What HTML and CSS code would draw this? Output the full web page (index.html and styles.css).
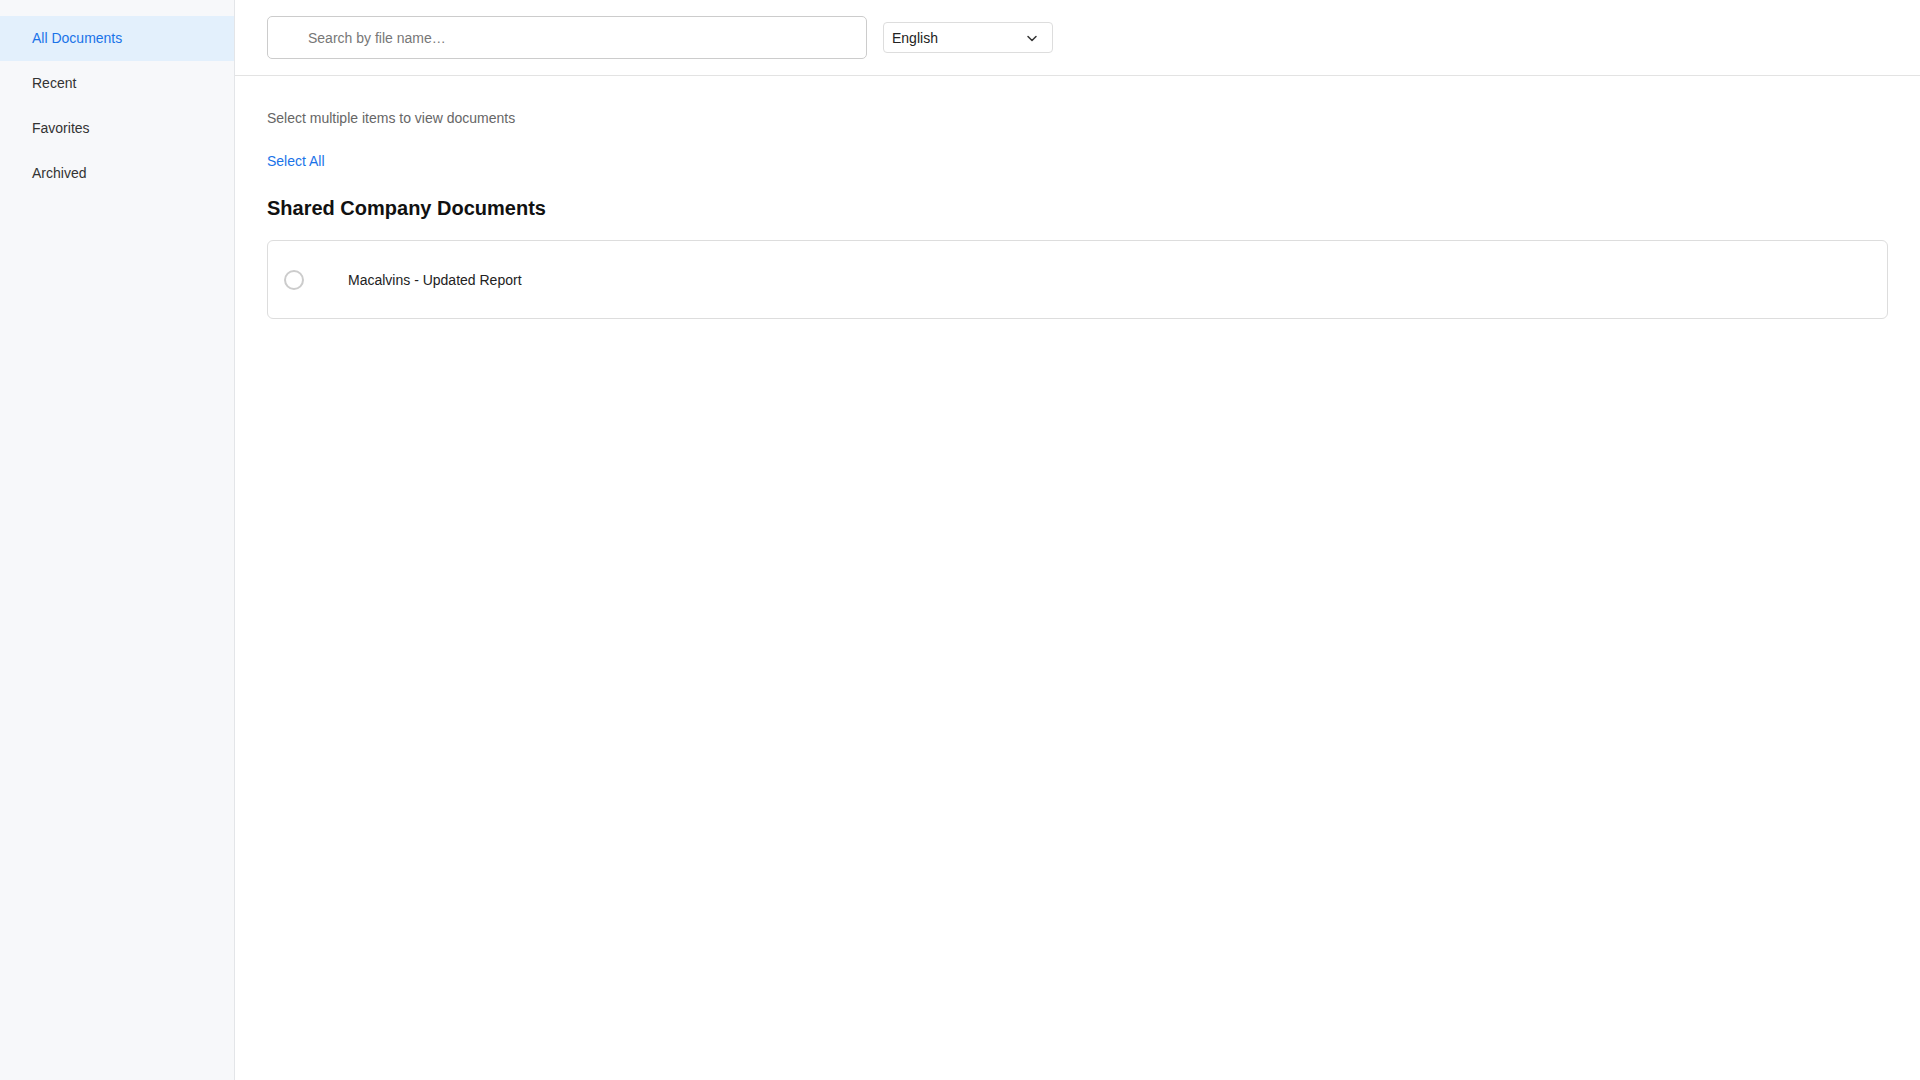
FILE: index.html
```html
<!DOCTYPE html>
<html lang="en">

<head>
    <meta charset="UTF-8">
    <meta name="viewport" content="width=device-width, initial-scale=1.0">
    <title>Documents</title>
    <link rel="stylesheet" href="styles.css">
</head>

<body>
    <div class="layout">
        <!-- Sidebar navigation -->
        <nav class="sidebar">
            <a class="nav-item active" href="#">All Documents</a>
            <a class="nav-item" href="#">Recent</a>
            <a class="nav-item" href="#">Favorites</a>
            <a class="nav-item" href="#">Archived</a>
        </nav>

        <main class="main">
            <header class="topbar">
                <input class="search" type="text" placeholder="Search by file name…">
                <div class="lang-select">
                    <span>English</span>
                    <svg width="14" height="14" viewBox="0 0 14 14" fill="none" stroke="#333" stroke-width="1.5"
                        stroke-linecap="round" stroke-linejoin="round">
                        <path d="M3 5.5 7 9.5l4-4" />
                    </svg>
                </div>
            </header>

            <section class="content">
                <p class="hint">Select multiple items to view documents</p>
                <a class="select-all" href="#">Select All</a>
                <h2>Shared Company Documents</h2>

                <div class="doc-list">
                    <label class="doc-row">
                        <span class="radio"></span>
                        <span class="doc-name">Macalvins - Updated Report</span>
                    </label>
                </div>
            </section>
        </main>
    </div>
</body>

</html>
```

FILE: styles.css
```css
body {
    margin: 0;
    font-family: "Liberation Sans", Arial, sans-serif;
    color: #222;
    background: #fff;
}

.layout {
    display: flex;
    min-height: 100vh;
}

.sidebar {
    width: 234px;
    flex-shrink: 0;
    background-color: #f7f8fa;
    border-right: 1px solid #e3e5e8;
    padding-top: 16px;
    display: flex;
    flex-direction: column;
}

.nav-item {
    display: block;
    height: 45px;
    line-height: 45px;
    padding-left: 32px;
    font-size: 14px;
    color: #333;
    text-decoration: none;
}

.nav-item.active {
    background-color: #e3f0fc;
    color: #1a73e8;
}

.main {
    flex: 1;
    min-width: 0;
}

.topbar {
    height: 76px;
    box-sizing: border-box;
    padding: 16px 32px 0;
    border-bottom: 1px solid #e3e3e3;
    display: flex;
    align-items: flex-start;
    gap: 16px;
}

.search {
    width: 600px;
    height: 43px;
    box-sizing: border-box;
    border: 1px solid #ccc;
    border-radius: 5px;
    padding: 0 12px 0 40px;
    font-family: inherit;
    font-size: 14px;
    color: #333;
    outline: none;
}

.search::placeholder {
    color: #777;
}

.lang-select {
    width: 170px;
    height: 31px;
    margin-top: 6px;
    box-sizing: border-box;
    border: 1px solid #ddd;
    border-radius: 4px;
    padding: 0 13px 0 8px;
    display: flex;
    align-items: center;
    justify-content: space-between;
    font-size: 14px;
    color: #222;
}

.content {
    padding: 32px 32px;
}

.hint {
    margin: 0;
    font-size: 14px;
    line-height: 20px;
    color: #666;
}

.select-all {
    display: inline-block;
    margin-top: 23px;
    font-size: 14px;
    line-height: 20px;
    color: #1a73e8;
    text-decoration: none;
}

h2 {
    margin: 25px 0 0;
    font-size: 20px;
    line-height: 24px;
    font-weight: bold;
    color: #111;
}

.doc-list {
    margin-top: 20px;
}

.doc-row {
    display: flex;
    align-items: center;
    height: 79px;
    box-sizing: border-box;
    border: 1px solid #ddd;
    border-radius: 6px;
    padding: 0 16px;
    cursor: pointer;
}

.radio {
    width: 20px;
    height: 20px;
    box-sizing: border-box;
    border: 2px solid #ccc;
    border-radius: 50%;
    flex-shrink: 0;
}

.doc-name {
    margin-left: 44px;
    font-size: 14px;
    color: #222;
}
```
